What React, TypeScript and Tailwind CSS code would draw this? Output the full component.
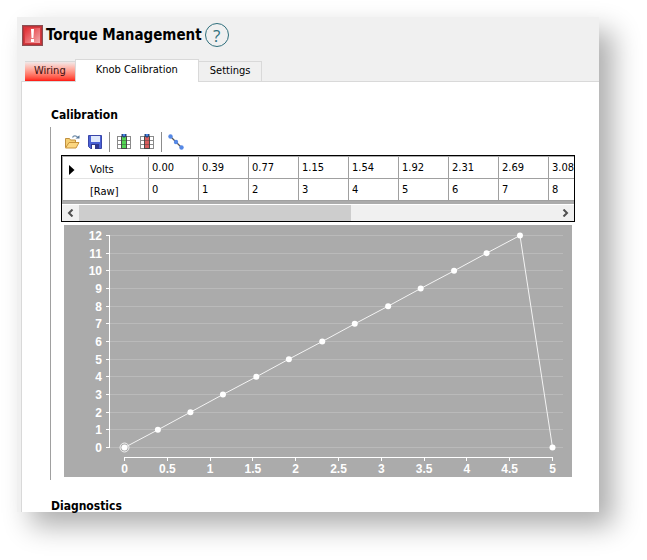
import React, { useRef } from 'react';
import { clsx } from 'clsx';

interface Point {
  volts: number;
  raw: number;
}

const points: Point[] = [
  { volts: 0, raw: 0 },
  { volts: 0.39, raw: 1 },
  { volts: 0.77, raw: 2 },
  { volts: 1.15, raw: 3 },
  { volts: 1.54, raw: 4 },
  { volts: 1.92, raw: 5 },
  { volts: 2.31, raw: 6 },
  { volts: 2.69, raw: 7 },
  { volts: 3.08, raw: 8 },
  { volts: 3.46, raw: 9 },
  { volts: 3.85, raw: 10 },
  { volts: 4.23, raw: 11 },
  { volts: 4.62, raw: 12 },
  { volts: 5, raw: 0 },
];

const tabs = ['Wiring', 'Knob Calibration', 'Settings'];

const AlertIcon = () => (
  <svg width="21" height="21" viewBox="0 0 21 21" aria-hidden="true">
    <defs>
      <linearGradient id="alert" x1="0" y1="0" x2="1" y2="1">
        <stop offset="0" stopColor="#e2262c" />
        <stop offset="1" stopColor="#f3b0b2" />
      </linearGradient>
    </defs>
    <rect width="21" height="21" fill="#8a5054" />
    <rect x="1" y="1" width="19" height="19" fill="#bd3338" />
    <rect x="2.5" y="2.5" width="16" height="16" fill="url(#alert)" stroke="#d4383d" />
    <path d="M9 4h3l-.6 9H9.600z" fill="#fff" />
    <rect x="9" y="14" width="3" height="3" fill="#fff" />
  </svg>
);

const OpenIcon = () => (
  <svg width="16" height="16" viewBox="0 0 16 16" aria-hidden="true">
    <path d="M1.5 13.5v-9h4l1 1.5h5v3" fill="#f5cf73" stroke="#c09040" />
    <path d="M1.5 14L5 8.5h10L12 14z" fill="#fcd781" stroke="#c8933c" />
    <path d="M8.5 3.5c1-2 3.500-2.200 5-.3" fill="none" stroke="#6f8ca8" strokeWidth="1.3" />
    <path d="M11.5 4.5h4V1.2z" fill="#55769a" />
  </svg>
);

const SaveIcon = () => (
  <svg width="16" height="16" viewBox="0 0 16 16" aria-hidden="true">
    <path d="M1.5 1.5h13v13h-11l-2-2z" fill="#4a62d6" stroke="#3a46a8" />
    <rect x="4" y="2" width="9" height="6" fill="#dfe8fb" />
    <rect x="4" y="10" width="8" height="5" fill="#30388c" />
    <rect x="5" y="11" width="3" height="4" fill="#fff" />
  </svg>
);

const ColumnIcon = ({ fill }: { fill: string }) => (
  <svg width="16" height="16" viewBox="0 0 16 16" aria-hidden="true">
    <rect x="1.5" y="2.5" width="13" height="12" fill="#fff" stroke="#8a8a8a" />
    <path d="M1 6.5h14M1 10.5h14" stroke="#8a8a8a" />
    <rect x="5.5" y="2.5" width="5" height="12" fill={fill} stroke="#4a4a4a" />
    <path d="M5 6.5h6M5 10.5h6" stroke="#3c3c3c" strokeOpacity=".4" />
    <path d="M5.5 0h5v1.5L8 4 5.500 1.500z" fill="#2b4a80" />
    <rect x="7" y="0" width="2" height="2" fill="#4a86e8" />
  </svg>
);

const LineIcon = () => (
  <svg width="16" height="16" viewBox="0 0 16 16" aria-hidden="true">
    <path d="M2 2l12 12" stroke="#555" strokeWidth="1.2" />
    <circle cx="2.5" cy="2.5" r="2.2" fill="#5588e6" />
    <circle cx="8" cy="8" r="2.2" fill="#5588e6" />
    <circle cx="13.5" cy="13.5" r="2.2" fill="#5588e6" />
  </svg>
);

const Chevron = ({ d }: { d: string }) => (
  <svg width="7" height="8" viewBox="0 0 7 8" aria-hidden="true">
    <path d={d} fill="none" stroke="#505050" strokeWidth="2" />
  </svg>
);

const ToolButton = ({ label, children }: { label: string; children: React.ReactNode }) => (
  <button type="button" aria-label={label} title={label} className="size-4">
    {children}
  </button>
);

const Separator = () => <span className="-mx-px h-5 w-px bg-[#8c8c8c]" />;

const Header = () => (
  <header className="mb-1.5 flex h-9 items-center gap-[3px] pl-[5px]">
    <AlertIcon />
    <h1 className="text-[15px] leading-5 font-bold">Torque Management</h1>
    <button
      type="button"
      aria-label="Help"
      className="grid size-6 place-items-center rounded-full border border-[#2f6f7c] font-['Open_Sans',sans-serif] text-[17px] leading-none text-[#2f6f7c]"
    >
      ?
    </button>
  </header>
);

const Tabs = () => (
  <div role="tablist" className="ml-1 flex items-end border-b border-[#d9d9d9] pl-1">
    {tabs.map((tab, index) => (
      <button
        key={tab}
        type="button"
        role="tab"
        aria-selected={index === 1}
        className={clsx(
          'border-t border-[#d9d9d9] text-[11px]',
          index === 0 && 'h-5 bg-linear-to-b from-[#f0e8e8] to-[#ff0a0a] px-[9px] text-[#3a1010]',
          index === 1 && '-mb-px h-[23px] border-x bg-white px-5 pb-0.5',
          index === 2 && 'h-5 border-r px-[11px]',
        )}
      >
        {tab}
      </button>
    ))}
  </div>
);

const Toolbar = () => (
  <div className="flex h-7 items-center gap-[7px] pt-0.5 pl-[13px]">
    <ToolButton label="Open"><OpenIcon /></ToolButton>
    <ToolButton label="Save"><SaveIcon /></ToolButton>
    <Separator />
    <ToolButton label="Insert column"><ColumnIcon fill="#52d352" /></ToolButton>
    <ToolButton label="Delete column"><ColumnIcon fill="#d85c5c" /></ToolButton>
    <Separator />
    <ToolButton label="Interpolate"><LineIcon /></ToolButton>
  </div>
);

const CalibrationTable = () => {
  const scroller = useRef<HTMLDivElement>(null);

  const scroll = (left: number) => scroller.current?.scrollBy({ left });

  return (
    <div className="mr-6 ml-[10px] border border-black bg-[#ababab]">
      <div ref={scroller} className="overflow-x-auto pt-px pb-[3px] pl-px [scrollbar-width:none]">
        <table className="w-[786px] table-fixed border-separate border-spacing-0 bg-white text-[11px] leading-4">
          <tbody>
            <tr className="h-[22px]">
              <th scope="row" className="w-[86px] border-r border-b border-r-[#a0a0a0] border-b-[#e3e3e3] p-0 pt-1 font-normal">
                <span className="flex items-center gap-[15px] pl-1.5">
                  <svg width="6" height="10" viewBox="0 0 6 10" aria-hidden="true">
                    <path d="M0 0l5.500 5L0 10z" />
                  </svg>
                  Volts
                </span>
              </th>
              {points.map((point) => (
                <td key={point.volts} className="w-[50px] border-r border-b border-[#a0a0a0] p-0 pl-[3px]">
                  {point.volts.toFixed(2)}
                </td>
              ))}
            </tr>
            <tr className="h-[22px]">
              <th scope="row" className="border-r border-b border-[#a0a0a0] p-0 pt-1 pl-[27px] text-left font-normal">
                [Raw]
              </th>
              {points.map((point) => (
                <td key={point.volts} className="border-r border-b border-[#a0a0a0] p-0 pl-[3px]">
                  {point.raw}
                </td>
              ))}
            </tr>
          </tbody>
        </table>
      </div>

      <div className="flex h-[17px] border-t border-white bg-[#f0f0f0]">
        <button
          type="button"
          aria-label="Scroll left"
          onClick={() => scroll(-50)}
          className="grid w-[17px] place-items-center"
        >
          <Chevron d="M5.5.5L2 4l3.500 3.500" />
        </button>
        <div className="flex-1">
          <div className="h-full w-[57%] bg-[#cdcdcd]" />
        </div>
        <button
          type="button"
          aria-label="Scroll right"
          onClick={() => scroll(50)}
          className="grid w-[17px] place-items-center"
        >
          <Chevron d="M1.5.5L5 4 1.500 7.500" />
        </button>
      </div>
    </div>
  );
};

const toX = (volts: number) => 60.5 + volts * 85.6;
const toY = (raw: number) => 222.5 - (raw * 212) / 12;
const snap = (value: number) => Math.floor(value) + 0.5;

const rawTicks = Array.from({ length: 13 }, (_, i) => i);
const voltTicks = Array.from({ length: 11 }, (_, i) => i / 2);

const Chart = () => (
  <div className="mt-[3px] mr-[27px] ml-[13px] bg-[#ababab]">
    <svg
      viewBox="0 0 508 252"
      className="block h-auto w-full font-['Liberation_Sans',sans-serif] text-[12px] font-bold"
      role="img"
      aria-label="Raw value against volts"
    >
      {rawTicks.map((raw) => (
        <g key={raw}>
          <path d={`M46 ${snap(toY(raw))}H499`} stroke="#bababa" />
          <path d={`M42 ${snap(toY(raw))}H46`} stroke="#fff" />
          <text x="38" y={snap(toY(raw)) + 4} textAnchor="end" fill="#fff">{raw}</text>
        </g>
      ))}
      <path d="M45.5 10V223M60 232.5H489" stroke="#fff" />
      {voltTicks.map((volts) => (
        <g key={volts}>
          <path d={`M${snap(toX(volts))} 232V236`} stroke="#fff" />
          <text x={toX(volts)} y="248" textAnchor="middle" fill="#fff">{volts}</text>
        </g>
      ))}

      <polyline
        points={points.map((p) => `${toX(p.volts)},${toY(p.raw)}`).join(' ')}
        fill="none"
        stroke="#f4f4f4"
      />
      {points.map((p) => (
        <circle key={p.volts} cx={toX(p.volts)} cy={toY(p.raw)} r="3" fill="#fff" />
      ))}
      {/* Selected point */}
      <circle cx={toX(0)} cy={toY(0)} r="4.5" fill="none" stroke="#f0f0f0" />
    </svg>
  </div>
);

const SectionTitle = ({ children }: { children: React.ReactNode }) => (
  <h2 className="pl-px text-[12px] leading-3 font-bold">{children}</h2>
);

const App = () => (
  <div className="bg-white pt-[17px] pr-12 pb-12 pl-[17px] font-['DejaVu_Sans_Condensed','DejaVu_Sans',sans-serif] text-black">
    <main className="bg-[#f0f0f0] shadow-[14px_14px_26px_rgba(0,0,0,0.32)]">
      <Header />
      <Tabs />
      <div className="ml-1 border-l border-[#d9d9d9] bg-white pt-[27px] pl-7">
        <SectionTitle>Calibration</SectionTitle>
        <div className="mt-1.5 mb-5 border-l border-[#a0a0a0] pb-[3px]">
          <Toolbar />
          <CalibrationTable />
          <Chart />
        </div>
        <SectionTitle>Diagnostics</SectionTitle>
      </div>
    </main>
  </div>
);

export default App;
